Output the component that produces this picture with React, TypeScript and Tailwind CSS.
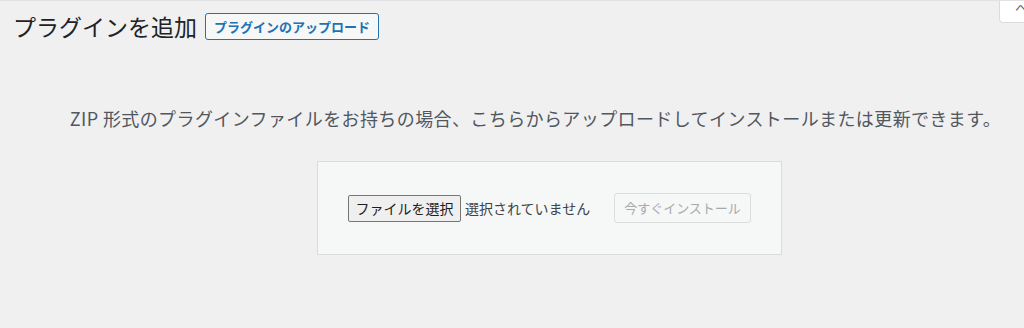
import React from "react";

export default function App() {
  return (
    <div
      className="relative w-[1024px] h-[328px] overflow-hidden bg-[#f0f0f1] border-t border-[#e2e2e4]"
      style={{ fontFamily: '"Noto Sans CJK JP", "Noto Sans", sans-serif' }}
    >
      {/* help tab */}
      <div className="absolute right-0 top-0 h-[22px] w-[25px] bg-white border-l border-b border-[#dcdcde] rounded-bl-[4px] overflow-hidden">
        <span className="absolute left-[15px] top-0 text-[13px] leading-[13px] text-[#646970] whitespace-nowrap">
          ヘルプ
        </span>
      </div>

      <div className="flex items-center gap-[8px] pl-[13px] pt-[10px]">
        <h1 className="text-[23px] leading-[30px] font-normal text-[#1d2327]">
          プラグインを追加
        </h1>
        <button className="h-[27px] px-[8px] border border-[#2271b1] rounded-[3px] bg-[#f6f7f7] text-[13px] leading-[17px] font-semibold text-[#2271b1]">
          プラグインのアップロード
        </button>
      </div>

      <p className="mt-[64px] pl-[47px] text-center text-[18px] leading-[27px] tracking-[0.4px] text-[#50575e] whitespace-nowrap">
        ZIP 形式のプラグインファイルをお持ちの場合、こちらからアップロードしてインストールまたは更新できます。
      </p>

      <div className="mt-[29px] ml-[317px] w-[465px] border border-[#dcdcde] bg-[#f6f7f7] p-[30px]">
        <div className="flex items-center h-[32px]">
          <button className="w-[113px] h-[27px] px-[6px] border border-[#767676] rounded-[2px] bg-[#efefef] text-[14px] leading-[20px] text-[#1d1d1d] whitespace-nowrap">
            ファイルを選択
          </button>
          <span className="ml-[4px] text-[14px] leading-[20px] text-[#3c434a] whitespace-nowrap">
            選択されていません
          </span>
          <button
            disabled
            className="ml-auto w-[137px] h-[30px] border border-[#dcdcde] rounded-[3px] bg-[#f6f7f7] text-[13px] leading-[28px] text-[#a7aaad] whitespace-nowrap"
          >
            今すぐインストール
          </button>
        </div>
      </div>
    </div>
  );
}
